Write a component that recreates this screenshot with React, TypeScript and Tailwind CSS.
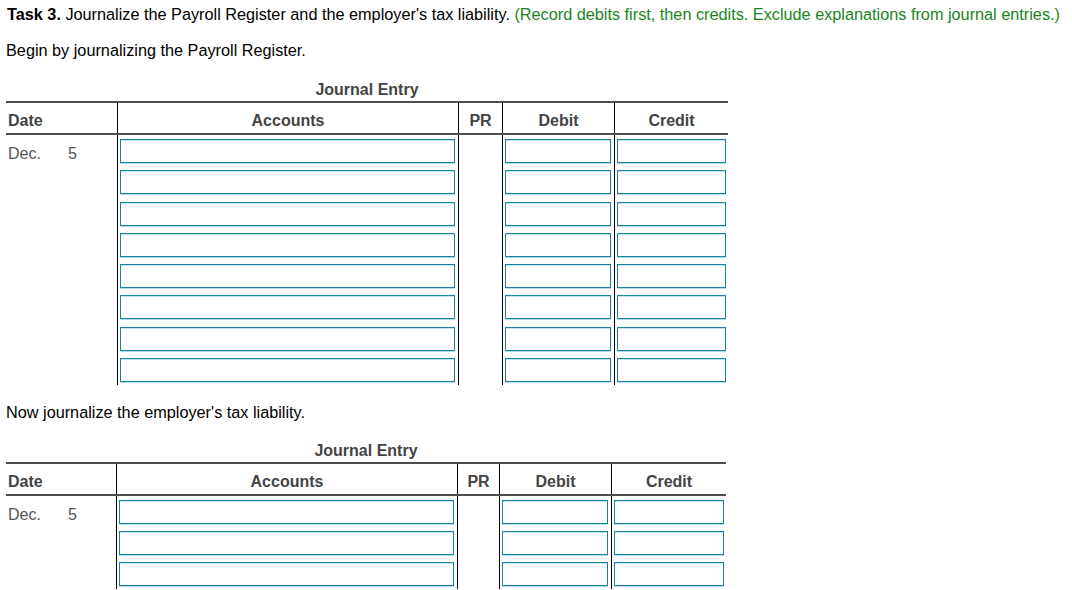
import React from 'react';

/* 분개 입력 표 — 열 폭은 표마다 조금씩 다르다 */
type JournalTableProps = {
    cols: string;
    rows: number;
    rowH: string;
};

function JournalTable({ cols, rows, rowH }: JournalTableProps) {
    return (
        <div className="w-fit">
            <div className="text-center text-[16px] font-bold text-[#444] leading-[18px] mb-[2px]">Journal Entry</div>
            {/* header — 글자는 칸 중앙보다 살짝 아래 */}
            <div className={`grid ${cols} border-t-2 border-b-2 border-[#4d4d4d] h-[34px] text-[16px] font-bold text-[#444]`}>
                <div className="flex items-center pt-[6px] pl-[2px]">Date</div>
                <div className="flex items-center justify-center pt-[6px] border-l border-black">Accounts</div>
                <div className="flex items-center justify-center pt-[6px] border-l border-black">PR</div>
                <div className="flex items-center justify-center pt-[6px] border-l border-black">Debit</div>
                <div className="flex items-center justify-center pt-[6px] border-l border-black">Credit</div>
            </div>
            {/* body */}
            {Array.from({ length: rows }).map((_, i) => (
                <div key={i} className={`grid ${cols} ${rowH}`}>
                    <div className="flex items-start pt-[10px] pl-[2px] text-[16px] leading-[18px] text-[#555]">
                        {i === 0 && (
                            <>
                                <span className="w-[60px]">Dec.</span>
                                <span>5</span>
                            </>
                        )}
                    </div>
                    <div className="border-l border-black pl-[2px] pr-[3px] pt-[4px]">
                        <Field />
                    </div>
                    <div className="border-l border-black" />
                    <div className="border-l border-black pl-[2px] pr-[3px] pt-[4px]">
                        <Field />
                    </div>
                    <div className="border-l border-black pl-[2px] pr-[2px] pt-[4px]">
                        <Field />
                    </div>
                </div>
            ))}
        </div>
    );
}

function Field() {
    return (
        <input
            type="text"
            className="block w-full h-[24px] bg-white border border-[#1a82a0] shadow-[inset_0_1px_0_#c4e3ed,0_1px_0_#b7dbe6] outline-none"
        />
    );
}

export default function App() {
    return (
        <div className="w-[1072px] h-[590px] overflow-hidden bg-white font-['Liberation_Sans',Arial,sans-serif] text-[16px] text-black pl-[6px]">
            <p className="pt-[5px] pl-px leading-[18px] text-[16.25px] whitespace-nowrap">
                <b>Task 3.</b> Journalize the Payroll Register and the employer's tax liability.{' '}
                <span className="text-[#18851c]">(Record debits first, then credits. Exclude explanations from journal entries.)</span>
            </p>
            <p className="mt-[18px] leading-[18px] text-[16.25px]">Begin by journalizing the Payroll Register.</p>

            <div className="mt-[22px]">
                <JournalTable cols="grid-cols-[111px_341px_44px_112px_114px]" rows={8} rowH="h-[31.3px]" />
            </div>

            <p className="mt-[18px] leading-[18px] text-[16.25px]">Now journalize the employer's tax liability.</p>

            <div className="mt-[21px]">
                <JournalTable cols="grid-cols-[110px_341px_42px_112px_115px]" rows={3} rowH="h-[31px]" />
            </div>
        </div>
    );
}
